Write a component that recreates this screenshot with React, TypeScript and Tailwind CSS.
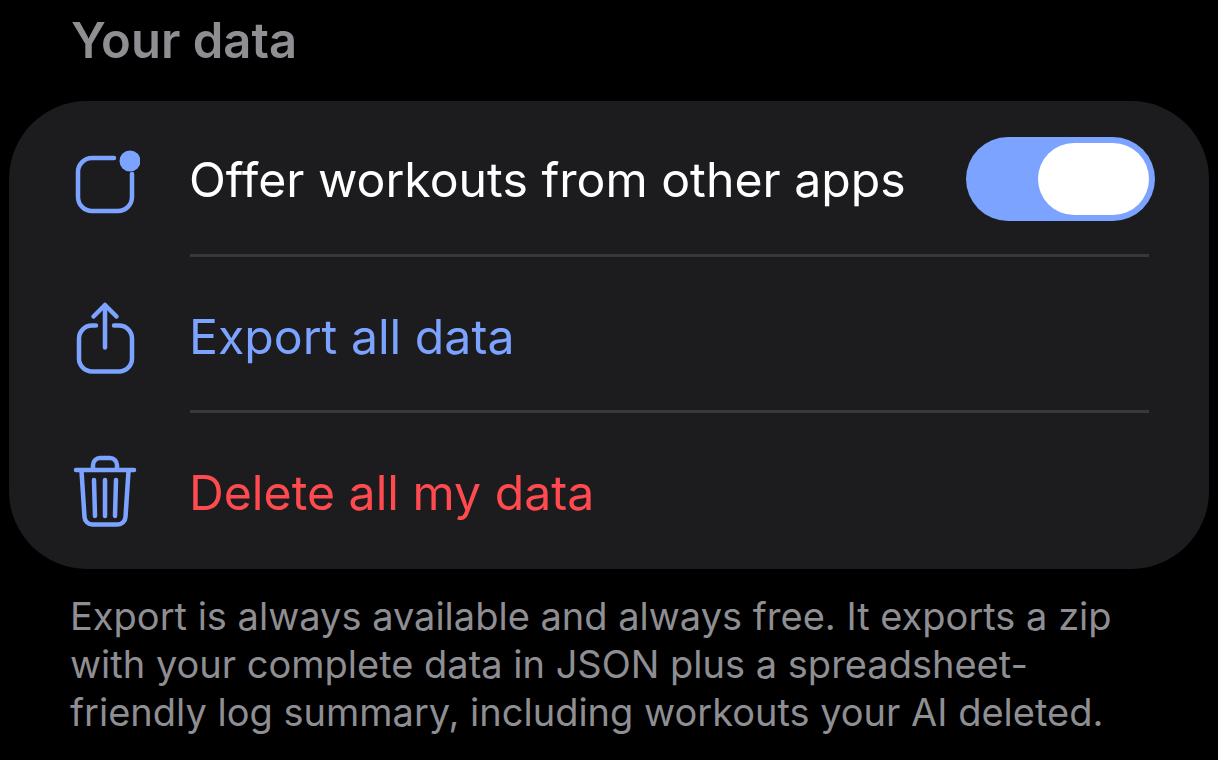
import React from 'react';

const BLUE = '#7ba3ff';

const NotificationIcon: React.FC = () => (
  <svg className="w-[70px] h-[80px] shrink-0" viewBox="70 138 70 80" fill="none" stroke={BLUE} strokeWidth="4.5" strokeLinecap="round">
    <path d="M114 158H92a14 14 0 0 0-14 14v25a14 14 0 0 0 14 14h26a14 14 0 0 0 14-14v-23" />
    <circle cx="130" cy="161" r="10.5" fill={BLUE} stroke="none" />
  </svg>
);

const ShareIcon: React.FC = () => (
  <svg className="w-[70px] h-[80px] shrink-0" viewBox="70 293.500 70 80" fill="none" stroke={BLUE} strokeWidth="4.5" strokeLinecap="round" strokeLinejoin="round">
    <path d="M96 325H92a13 13 0 0 0-13 13v20a13 13 0 0 0 13 13h27a13 13 0 0 0 13-13v-20a13 13 0 0 0-13-13h-5" />
    <path d="M105 347V305" />
    <path d="M93.500 316L105 304.500 116.500 316" />
  </svg>
);

const TrashIcon: React.FC = () => (
  <svg className="w-[70px] h-[80px] shrink-0" viewBox="70 451 70 80" fill="none" stroke={BLUE} strokeWidth="4.5" strokeLinecap="round" strokeLinejoin="round">
    <path d="M76 470H134" />
    <path d="M93 469v-4a7 7 0 0 1 7-7h10a7 7 0 0 1 7 7v4" />
    <path d="M81.500 471L84.500 517a8 8 0 0 0 8 7.500h25a8 8 0 0 0 8-7.500L128.500 471" />
    <path d="M94 480L95 516" />
    <path d="M105 480V516" />
    <path d="M116 480L115 516" />
  </svg>
);

const Divider: React.FC = () => <div className="h-[3px] ml-[181px] mr-[60px] bg-[#38383a]" />;

const App: React.FC = () => {
  return (
    <div className="w-[1218px] h-[760px] overflow-hidden bg-black px-[9px] font-['Inter',sans-serif]">
      <h2 className="h-[101px] pl-[62px] pt-[13px] text-[49px] leading-[56px] font-semibold text-[#8e8e93]">Your data</h2>

      <div className="bg-[#1c1c1e] rounded-[78px] h-[468px]">
        <div className="h-[153px] flex items-center pl-[61px] pr-[54px]">
          <NotificationIcon />
          <span className="ml-[49px] mt-[4px] flex-1 text-[48.200px] leading-[58px] text-white">Offer workouts from other apps</span>
          <div className="w-[189px] h-[84px] mt-[2px] rounded-full bg-[#7ba3ff] flex items-center justify-end pr-[6px]">
            <div className="w-[111px] h-[72px] rounded-full bg-white" />
          </div>
        </div>
        <Divider />
        <div className="h-[153px] flex items-center pl-[61px] pr-[54px]">
          <ShareIcon />
          <span className="ml-[49px] mt-[7px] text-[48.200px] leading-[58px] text-[#7ba3ff]">Export all data</span>
        </div>
        <Divider />
        <div className="h-[156px] flex items-center pl-[61px] pr-[54px]">
          <TrashIcon />
          <span className="ml-[49px] mt-[3px] text-[48.200px] leading-[58px] text-[#ff4a4f]">Delete all my data</span>
        </div>
      </div>

      <p className="pl-[61px] pr-[60px] pt-[23px] text-[38px] leading-[48px] text-[#8e8e93]">
        Export is always available and always free. It exports a zip with your complete data in JSON plus a spreadsheet-friendly log summary, including workouts your AI deleted.
      </p>
    </div>
  );
};

export default App;
